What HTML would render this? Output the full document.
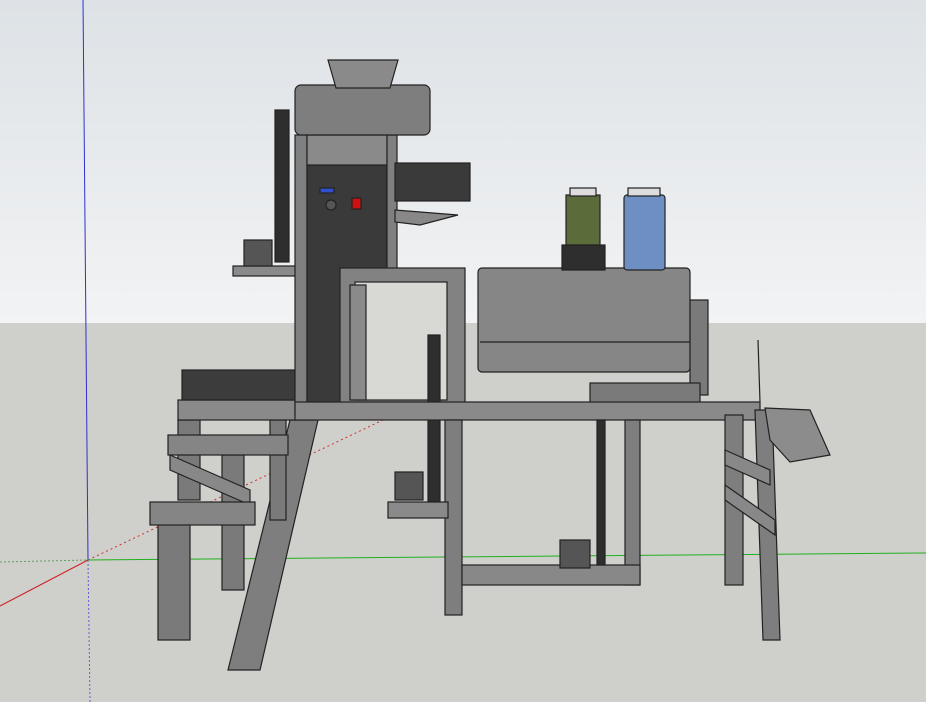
<!DOCTYPE html>
<html><head><meta charset="utf-8"><style>
html,body{margin:0;padding:0;width:926px;height:702px;overflow:hidden;}
svg{display:block}
</style></head><body>
<svg width="926" height="702" viewBox="0 0 926 702" xmlns="http://www.w3.org/2000/svg">
<defs>
<linearGradient id="sky" x1="0" y1="0" x2="0" y2="1">
<stop offset="0" stop-color="#dde2e6"/><stop offset="1" stop-color="#f2f3f4"/>
</linearGradient>
</defs>
<rect width="926" height="323" fill="url(#sky)"/>
<rect y="323" width="926" height="379" fill="#cfcfcb"/>
<!-- axes -->
<line x1="83" y1="0" x2="88" y2="560" stroke="#3030d0" stroke-width="1"/>
<line x1="88" y1="560" x2="90" y2="702" stroke="#6060d0" stroke-dasharray="2,2"/>
<line x1="88" y1="560" x2="0" y2="606" stroke="#d02020"/>
<line x1="88" y1="560" x2="440" y2="393" stroke="#d03030" stroke-dasharray="2,3"/>
<line x1="88" y1="560" x2="926" y2="553" stroke="#20b020"/>
<line x1="0" y1="562" x2="88" y2="560" stroke="#60a060" stroke-dasharray="2,2"/>
<g stroke="#222" stroke-width="1.2">
<!-- left table -->
<polygon points="290,420 318,420 260,670 228,670" fill="#7e7e7e"/>
<rect x="158" y="520" width="32" height="120" fill="#7a7a7a"/>
<rect x="222" y="455" width="22" height="135" fill="#7a7a7a"/>
<rect x="270" y="420" width="16" height="100" fill="#7a7a7a"/>
<rect x="178" y="420" width="22" height="80" fill="#7a7a7a"/>
<polygon points="170,455 250,490 250,505 170,470" fill="#888"/>
<rect x="168" y="435" width="120" height="20" fill="#858585"/>
<rect x="150" y="502" width="105" height="23" fill="#858585"/>
<rect x="178" y="400" width="118" height="20" fill="#8a8a8a"/>
<rect x="182" y="370" width="113" height="30" fill="#3c3c3c"/>
<!-- belt & shelf -->
<rect x="275" y="110" width="14" height="152" fill="#2e2e2e"/>
<rect x="233" y="266" width="67" height="10" fill="#8a8a8a"/>
<rect x="244" y="240" width="28" height="26" fill="#555"/>
<!-- column and panel -->
<rect x="295" y="135" width="12" height="280" fill="#808080"/>
<rect x="307" y="165" width="80" height="245" fill="#3a3a3a"/>
<rect x="307" y="135" width="80" height="30" fill="#8a8a8a"/>
<rect x="387" y="135" width="10" height="140" fill="#808080"/>
<rect x="320" y="188" width="14" height="5" fill="#3050d0"/>
<circle cx="331" cy="205" r="5" fill="#555"/>
<rect x="352" y="198" width="9" height="11" fill="#d01010"/>
<!-- motor top -->
<rect x="295" y="85" width="135" height="50" rx="6" fill="#7e7e7e"/>
<polygon points="328,60 398,60 390,88 336,88" fill="#8a8a8a"/>
<rect x="395" y="163" width="75" height="38" fill="#3a3a3a"/>
<polygon points="395,210 458,215 420,225 395,222" fill="#888"/>
<!-- frame -->
<rect x="340" y="268" width="125" height="142" fill="#828282"/>
<rect x="355" y="282" width="92" height="118" fill="#d8d8d4"/>
<rect x="350" y="285" width="16" height="115" fill="#8a8a8a"/>
<rect x="428" y="335" width="12" height="170" fill="#2e2e2e"/>
<!-- drum -->
<rect x="478" y="268" width="212" height="104" rx="4" fill="#868686"/>
<line x1="480" y1="342" x2="690" y2="342"/>
<rect x="690" y="300" width="18" height="95" fill="#7a7a7a"/>
<!-- jars -->
<rect x="562" y="245" width="43" height="25" fill="#2e2e2e"/>
<rect x="566" y="195" width="34" height="50" fill="#5b6b3a"/>
<rect x="624" y="195" width="41" height="75" rx="3" fill="#6e8fc3"/>
<rect x="570" y="188" width="26" height="8" fill="#ddd"/>
<rect x="628" y="188" width="32" height="8" fill="#ddd"/>
<!-- shaft bits -->
<rect x="590" y="383" width="110" height="20" fill="#7a7a7a"/>
<!-- main beam -->
<rect x="295" y="402" width="465" height="18" fill="#8a8a8a"/>
<!-- lower frame -->
<rect x="445" y="420" width="17" height="195" fill="#7e7e7e"/>
<rect x="625" y="420" width="15" height="165" fill="#7e7e7e"/>
<rect x="462" y="565" width="178" height="20" fill="#888"/>
<rect x="597" y="420" width="8" height="145" fill="#2e2e2e"/>
<rect x="388" y="502" width="60" height="16" fill="#8a8a8a"/>
<rect x="395" y="472" width="28" height="28" fill="#555"/>
<rect x="560" y="540" width="30" height="28" fill="#555"/>
<!-- right legs -->
<rect x="725" y="415" width="18" height="170" fill="#7e7e7e"/>
<polygon points="755,410 772,410 780,640 763,640" fill="#7e7e7e"/>
<polygon points="725,450 770,470 770,485 725,465" fill="#888"/>
<polygon points="725,485 775,520 775,535 725,500" fill="#888"/>
<polygon points="765,408 810,410 830,455 790,462 770,440" fill="#8c8c8c"/>
<line x1="758" y1="340" x2="760" y2="402"/>
</g>
</svg>
</body></html>
